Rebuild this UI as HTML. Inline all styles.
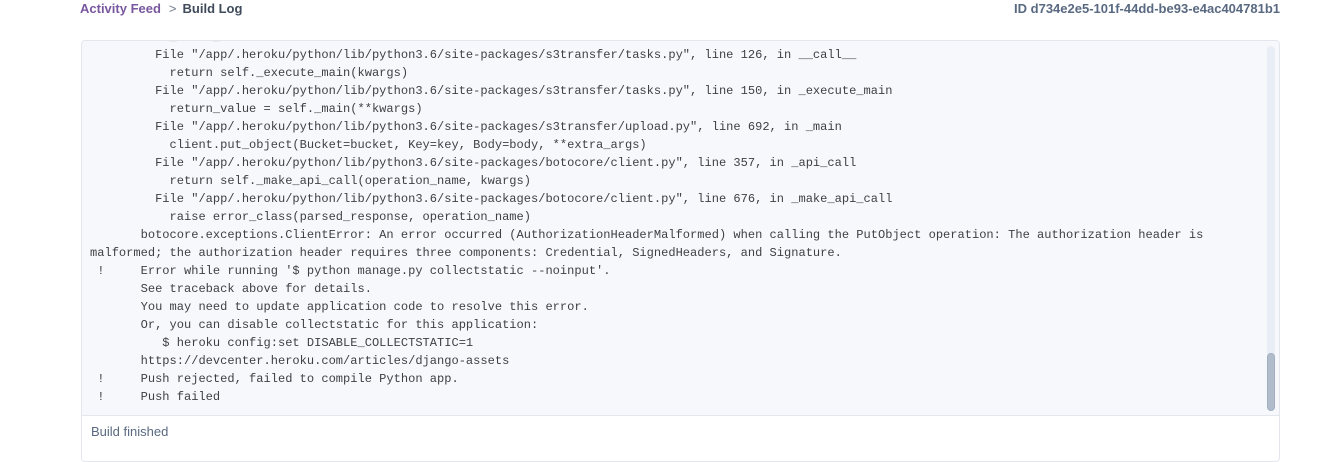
<!DOCTYPE html>
<html><head><style>
body{margin:0;width:1340px;height:436px;overflow:hidden;background:#fff;font-family:"Liberation Sans",sans-serif;position:relative}
.bc{position:absolute;top:0;left:80px;font-size:13px;line-height:18px;font-weight:bold}
.bc .a{color:#79589f}
.bc .s{color:#6f7a8a;font-weight:normal;margin:0 6px 0 8px}
.bc .b{color:#3f4a5a}
.id{position:absolute;top:0;right:60px;font-size:13px;line-height:18px;font-weight:bold;color:#596981}
.box{position:absolute;left:81px;top:40px;width:1197px;height:420px;border:1px solid #e3e6ec;border-radius:4px;background:#f7f8fb;overflow:hidden}
pre{margin:0;position:absolute;left:8px;top:-13px;font-family:"Liberation Mono",monospace;font-size:12.05px;line-height:18px;color:#3f3f44}
.track{position:absolute;left:1185px;top:5px;width:8px;height:365px;background:#e9edf5;border-radius:4px}
.thumb{position:absolute;left:1185px;top:312px;width:8px;height:58px;background:#b1bccb;border-radius:4px;border:1px solid #a3afc0;box-sizing:border-box}
.foot{position:absolute;left:0;top:374px;width:100%;height:60px;background:#fff;border-top:1px solid #e3e6ec}
.foot span{position:absolute;left:9px;top:8px;font-size:13px;color:#596981}
</style></head><body>
<div class="bc"><span class="a">Activity Feed</span><span class="s">&gt;</span><span class="b">Build Log</span></div>
<div class="id">ID d734e2e5-101f-44dd-be93-e4ac404781b1</div>
<div class="box">
<pre>           _     _    
         File "/app/.heroku/python/lib/python3.6/site-packages/s3transfer/tasks.py", line 126, in __call__
           return self._execute_main(kwargs)
         File "/app/.heroku/python/lib/python3.6/site-packages/s3transfer/tasks.py", line 150, in _execute_main
           return_value = self._main(**kwargs)
         File "/app/.heroku/python/lib/python3.6/site-packages/s3transfer/upload.py", line 692, in _main
           client.put_object(Bucket=bucket, Key=key, Body=body, **extra_args)
         File "/app/.heroku/python/lib/python3.6/site-packages/botocore/client.py", line 357, in _api_call
           return self._make_api_call(operation_name, kwargs)
         File "/app/.heroku/python/lib/python3.6/site-packages/botocore/client.py", line 676, in _make_api_call
           raise error_class(parsed_response, operation_name)
       botocore.exceptions.ClientError: An error occurred (AuthorizationHeaderMalformed) when calling the PutObject operation: The authorization header is
malformed; the authorization header requires three components: Credential, SignedHeaders, and Signature.
 !     Error while running '$ python manage.py collectstatic --noinput'.
       See traceback above for details.
       You may need to update application code to resolve this error.
       Or, you can disable collectstatic for this application:
          $ heroku config:set DISABLE_COLLECTSTATIC=1
       https://devcenter.heroku.com/articles/django-assets
 !     Push rejected, failed to compile Python app.
 !     Push failed</pre>
<div class="track"></div><div class="thumb"></div>
<div class="foot"><span>Build finished</span></div>
</div>
</body></html>
